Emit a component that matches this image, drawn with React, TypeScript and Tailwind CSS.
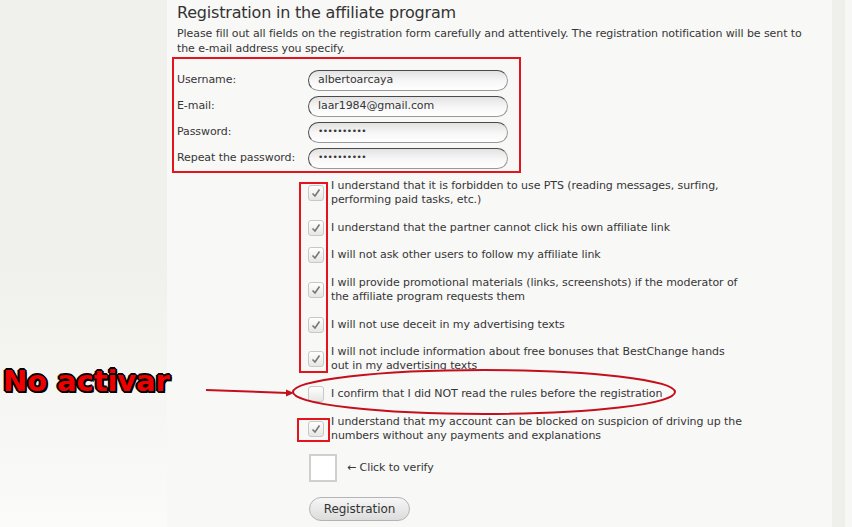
import React from 'react';

const font = "font-['DejaVu_Sans',Verdana,sans-serif]";

function Check({ checked }: { checked: boolean }) {
  return (
    <div className="w-[16px] h-[16px] -my-[1px] shrink-0 rounded-[3px] border border-[#c8c8c8] bg-gradient-to-b from-[#ffffff] to-[#e6e6e4] flex items-center justify-center">
      {checked && (
        <svg width="10" height="10" viewBox="0 0 10 10">
          <path d="M1.5 5.5 L4 8 L8.5 1.5" fill="none" stroke="#777" strokeWidth="1.6" />
        </svg>
      )}
    </div>
  );
}

function Field({ label, value, secret }: { label: string; value: string; secret?: boolean }) {
  return (
    <div className="flex items-center h-[26px]">
      <div className="w-[131px]">{label}</div>
      <div className="w-[200px] h-[21px] rounded-full border border-[#9a9a9a] border-t-[#4a4a4a] border-l-[#4a4a4a] bg-gradient-to-b from-[#e2e2e2] via-[#f6f6f6] to-[#ffffff] flex items-center pl-[9px]">
        {secret ? <span className="text-[9px] tracking-[-0.5px]">{value}</span> : value}
      </div>
    </div>
  );
}

const rules: { lines: string[]; checked: boolean }[] = [
  { lines: ['I understand that it is forbidden to use PTS (reading messages, surfing,', 'performing paid tasks, etc.)'], checked: true },
  { lines: ['I understand that the partner cannot click his own affiliate link'], checked: true },
  { lines: ['I will not ask other users to follow my affiliate link'], checked: true },
  { lines: ['I will provide promotional materials (links, screenshots) if the moderator of', 'the affiliate program requests them'], checked: true },
  { lines: ['I will not use deceit in my advertising texts'], checked: true },
  { lines: ['I will not include information about free bonuses that BestChange hands', 'out in my advertising texts'], checked: true },
  { lines: ['I confirm that I did NOT read the rules before the registration'], checked: false },
  { lines: ['I understand that my account can be blocked on suspicion of driving up the', 'numbers without any payments and explanations'], checked: true },
];

export default function App() {
  return (
    <div className={`relative w-[852px] h-[527px] overflow-hidden flex text-[11px] tracking-[-0.08px] text-[#363636] ${font}`}>
      {/* left strip */}
      <div className="w-[167px] h-full bg-gradient-to-b from-[#f0f0ec] via-[#f0f0ec] to-[#fbfbfa]" />

      {/* main panel */}
      <div className="w-[665px] h-full bg-[#f8f8f6] pl-[10px]">
        <h1 className="text-[16px] tracking-[-0.2px] leading-[22px] mt-[2px] text-[#333]">Registration in the affiliate program</h1>
        <p className="leading-[15px] mt-[2px] w-[640px]">
          Please fill out all fields on the registration form carefully and attentively. The registration notification will be sent to
          <br />
          the e-mail address you specify.
        </p>

        <div className="ml-[-5px] mt-[1px] w-[349px] border-2 border-[#e3141d] pt-[8px] pl-[3px]">
          <Field label="Username:" value="albertoarcaya" />
          <Field label="E-mail:" value="laar1984@gmail.com" />
          <Field label="Password:" value="••••••••••" secret />
          <Field label="Repeat the password:" value="••••••••••" secret />
        </div>

        <div className="flex flex-col gap-[13.7px] mt-[6px] ml-[131px] leading-[14px]">
          {rules.map((r, i) => (
            <div key={i} className="flex items-center gap-[7px]">
              <Check checked={r.checked} />
              <div>
                {r.lines.map((l, j) => (
                  <div key={j}>{l}</div>
                ))}
              </div>
            </div>
          ))}
        </div>

        <div className="flex items-center gap-[10px] ml-[132px] mt-[11px]">
          <div className="w-[28px] h-[28px] bg-white border-2 border-[#cfcfcf]" />
          <span>← Click to verify</span>
        </div>

        <button className="ml-[132px] mt-[15px] w-[101px] h-[24px] rounded-full border border-[#b4b4b4] bg-gradient-to-b from-[#f6f6f6] to-[#dcdcdc] text-[12px] text-[#333]">
          Registration
        </button>
      </div>

      {/* right strip */}
      <div className="w-[13px] h-full bg-[#efefeb]" />
      <div className="flex-1 h-full bg-[#f7f7f5]" />

      {/* annotations */}
      <div className="absolute left-[299px] top-[182px] w-[29px] h-[191px] border-2 border-[#e3141d]" />
      <div className="absolute left-[297px] top-[418px] w-[33px] h-[24px] border-2 border-[#e3141d]" />
      <svg className="absolute left-0 top-0" width="852" height="527">
        <ellipse cx="484" cy="392" rx="191" ry="22" fill="none" stroke="#c4101c" strokeWidth="2" />
        <line x1="206" y1="390" x2="288" y2="393" stroke="#c4101c" strokeWidth="2" />
        <path d="M286 389.5 L294 393 L286 396.5 Z" fill="#c4101c" />
      </svg>
      <div className="absolute left-[3px] top-[363px] text-[29px] leading-[36px] font-bold text-[#ee0000] [text-shadow:2px_2px_0_#000,-1px_-1px_0_#000,1px_-1px_0_#000,-1px_1px_0_#000,2px_0_0_#000,0_2px_0_#000,-2px_0_0_#000,0_-2px_0_#000]">
        No activar
      </div>
    </div>
  );
}
